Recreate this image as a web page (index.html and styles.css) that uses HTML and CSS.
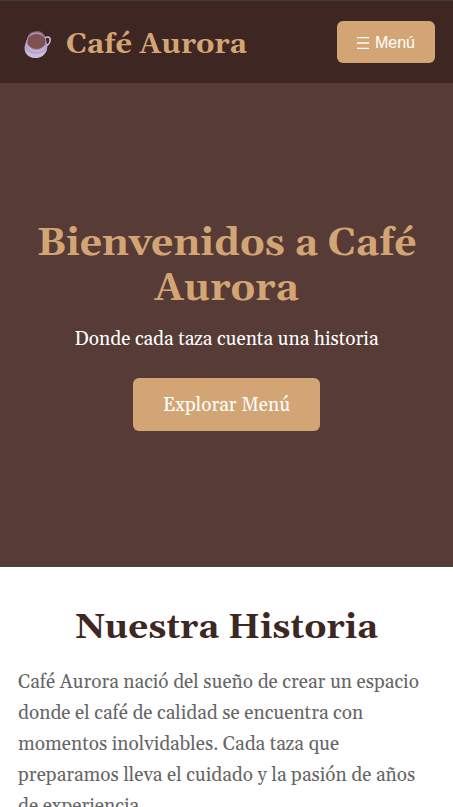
FILE: index.html
```html
<!DOCTYPE html>
<html lang="es">
<head>
<meta charset="utf-8">
<meta name="viewport" content="width=device-width, initial-scale=1">
<title>Café Aurora</title>
<link rel="stylesheet" href="styles.css">
</head>
<body>
<header class="site-header">
  <a class="brand" href="#inicio">
    <svg class="brand-logo" viewBox="0 0 28 30" aria-hidden="true">
      <path d="M20 9c2-3 6-2.500 6.200.5 0 3.500-2.500 6-5 6.500" fill="none" stroke="#c9bddb" stroke-width="1.600"/>
      <path d="M.5 18C.5 15 2 13 2.500 10L22 11c1 3 2 5 1 8-1 5-6 9-11 9C6 28 .5 25 .5 18z" fill="#b5a6cd"/>
      <path d="M3 10C4 0 19-1 21 8l1 5c0 5-4 9-9 9S2 18 3 10z" fill="#c4b7d5"/>
      <path d="M4 8C6 0 18 0 20.500 7" fill="none" stroke="#79647a" stroke-width="1.500"/>
      <ellipse cx="12.500" cy="11.500" rx="9.500" ry="8" fill="#815050" stroke="#a792a8"/>
      <path d="M1 19c4 6 17 7 22 0-1 5-6 9-11 9S2 25 1 19z" fill="#cbbde0"/>
    </svg>
    <span>Café Aurora</span>
  </a>
  <button class="menu-toggle" type="button"><svg class="menu-icon" viewBox="0 0 12 12" aria-hidden="true"><path d="M0 .5h12M0 6h12M0 11.500h12" stroke="currentColor" stroke-width="1.300"/></svg>Menú</button>
</header>
<main>
  <section class="hero" id="inicio">
    <h1>Bienvenidos a Café Aurora</h1>
    <p>Donde cada taza cuenta una historia</p>
    <a class="cta" href="#menu">Explorar Menú</a>
  </section>
  <section class="story">
    <h2>Nuestra Historia</h2>
    <p>Café Aurora nació del sueño de crear un espacio donde el café de calidad se encuentra con momentos inolvidables. Cada taza que preparamos lleva el cuidado y la pasión de años de experiencia.</p>
  </section>
</main>
</body>
</html>
```
FILE: styles.css
```css
* { box-sizing: border-box; }

body {
  margin: 0;
  background: #fff;
  color: #666;
  font-family: Georgia, Gelasio, "Liberation Serif", serif;
}

h1, h2, p { margin: 0; }

.site-header {
  display: flex;
  align-items: center;
  justify-content: space-between;
  padding: 20px 18px;
  border-top: 1px solid #3c3c3f;
  background: #3e2723;
}

.brand {
  display: flex;
  align-items: center;
  gap: 14px;
  padding: 6px 0 0 6px;
  color: #d4a574;
  font-size: 29px;
  font-weight: bold;
  line-height: 36px;
  text-decoration: none;
}

.brand-logo { width: 28px; height: 30px; }

.menu-toggle {
  display: flex;
  align-items: center;
  gap: 6px;
  height: 42px;
  padding: 2px 20px 0;
  border: 0;
  border-radius: 6px;
  background: #d4a574;
  color: #fff;
  font-family: "Liberation Sans", Arial, sans-serif;
  font-size: 16px;
}

.menu-icon { width: 12px; height: 12px; }

.hero {
  display: flex;
  flex-direction: column;
  align-items: center;
  justify-content: center;
  min-height: 60vh;
  padding: 20px 18px 18px;
  background: #563b36;
  color: #fff;
  text-align: center;
}

.hero h1 {
  margin-bottom: 16px;
  color: #d4a574;
  font-size: 39px;
  line-height: 45px;
}

.hero p {
  margin-bottom: 27px;
  font-size: 19px;
  line-height: 24px;
}

.cta {
  padding: 15px 30px 13px;
  border-radius: 6px;
  background: #d4a574;
  color: #fff;
  font-size: 19px;
  line-height: 25px;
  text-decoration: none;
}

.story { padding: 39px 18px; }

.story h2 {
  margin-bottom: 17px;
  color: #3e2723;
  font-size: 35px;
  line-height: 44px;
  text-align: center;
}

.story p {
  font-size: 19px;
  line-height: 31px;
}
```
